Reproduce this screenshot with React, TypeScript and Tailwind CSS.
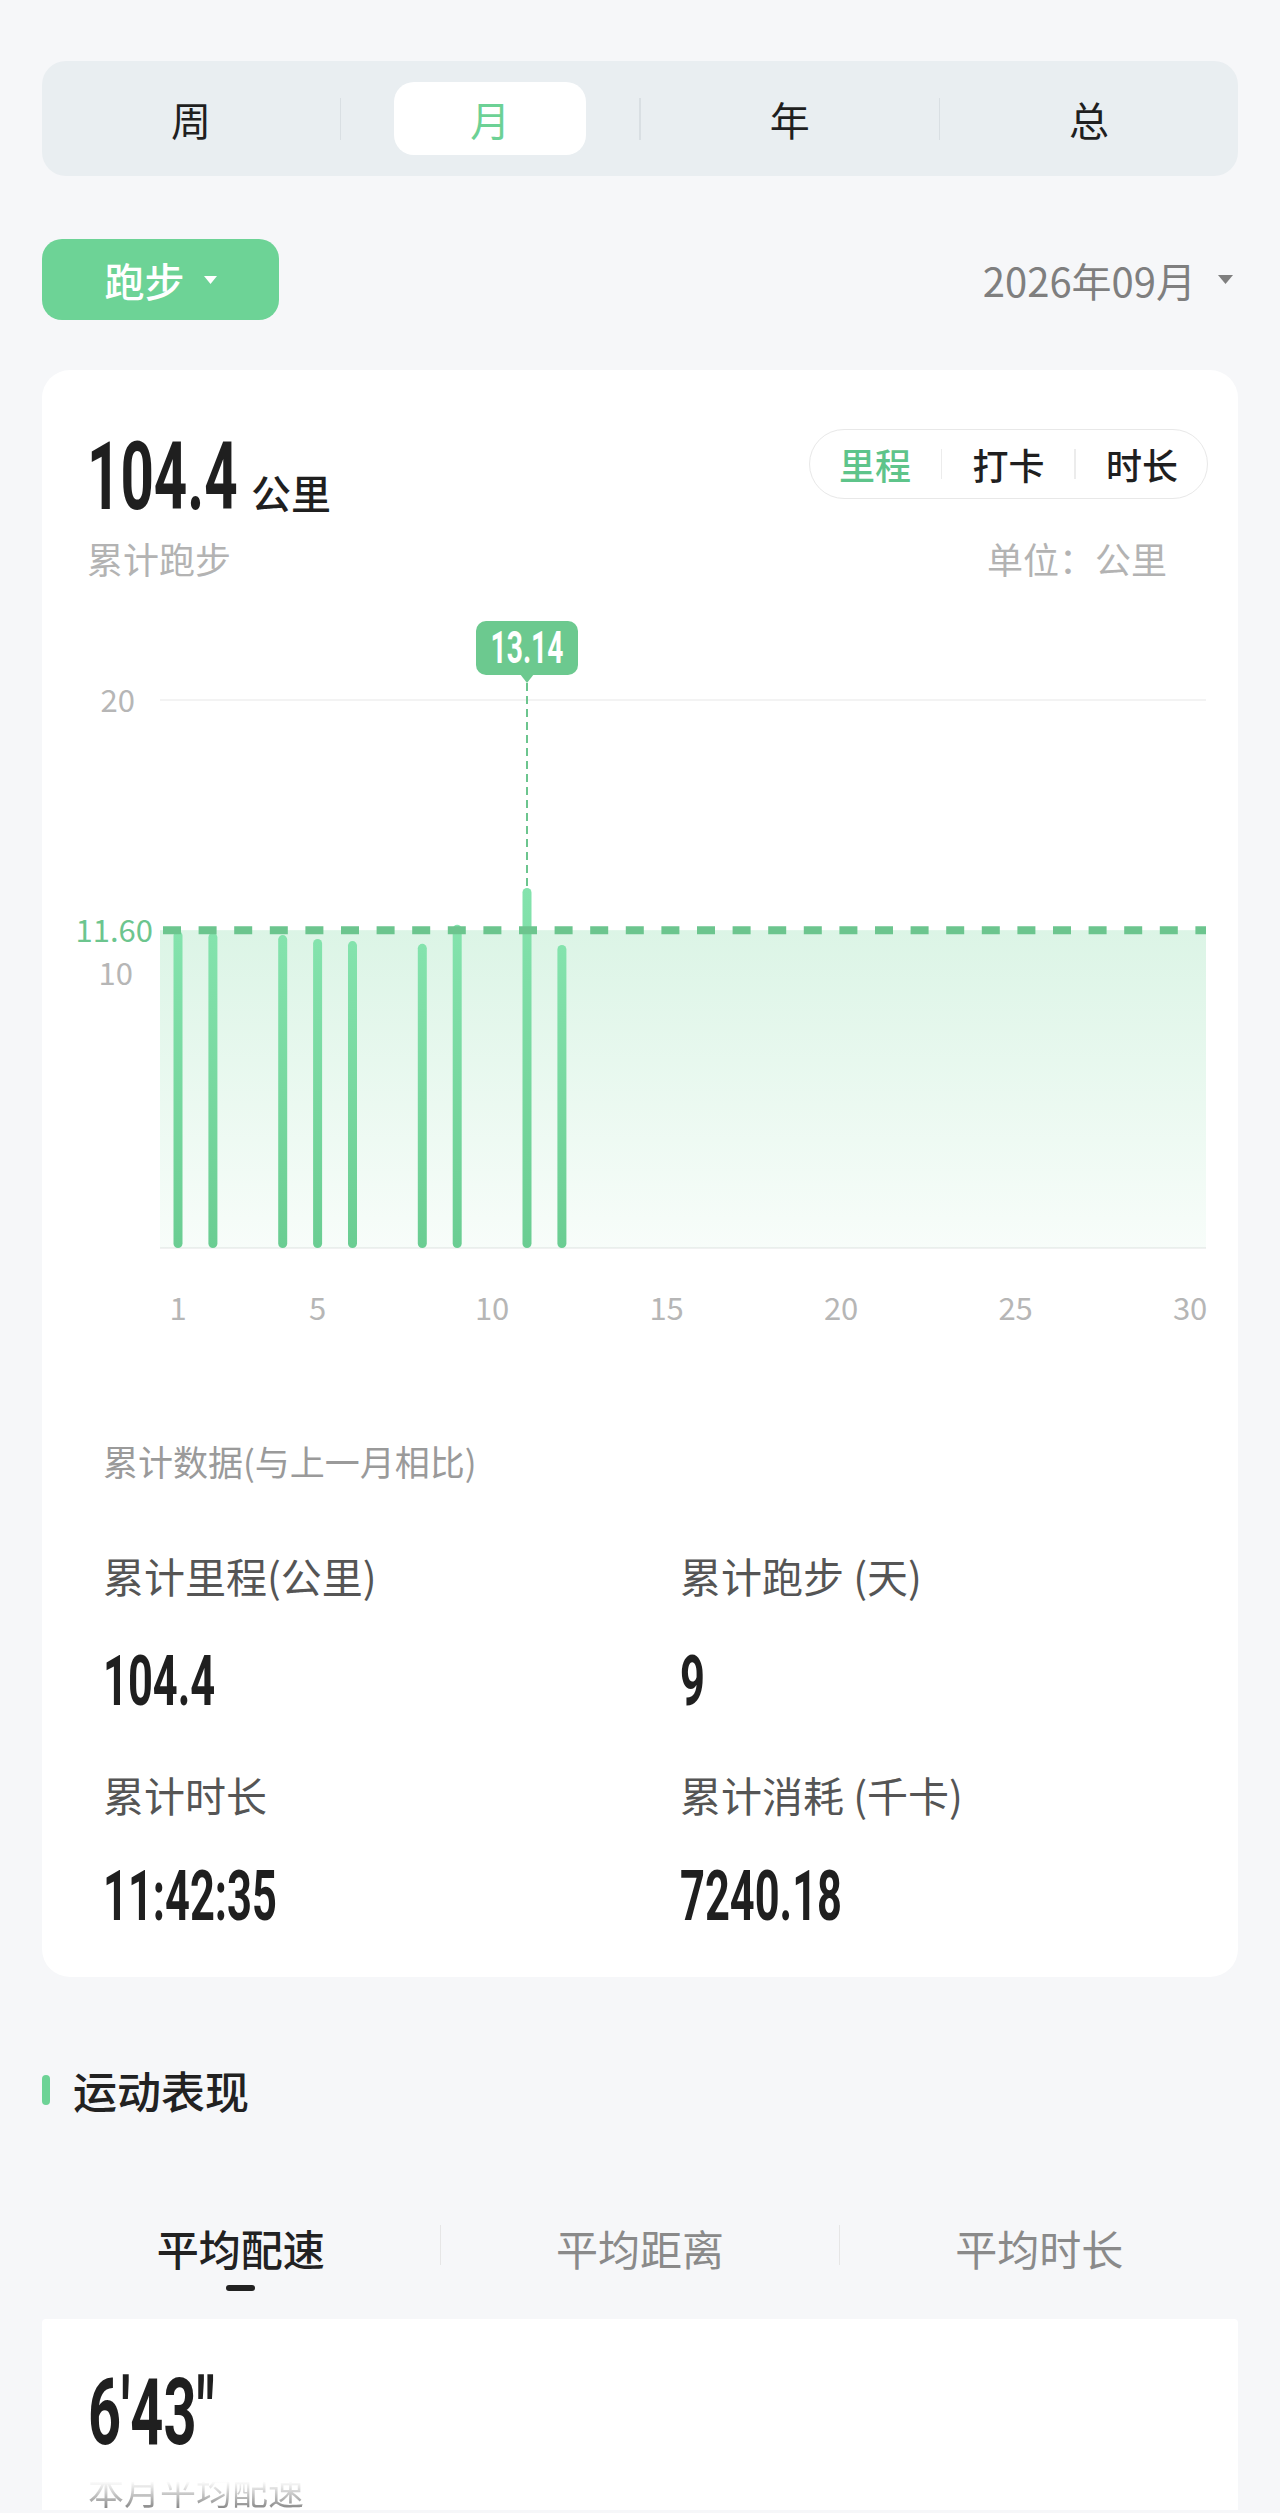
import React from "react";

const bars = [
  { d: 1, v: 11.56 },
  { d: 2, v: 11.5 },
  { d: 4, v: 11.42 },
  { d: 5, v: 11.28 },
  { d: 6, v: 11.2 },
  { d: 8, v: 11.1 },
  { d: 9, v: 11.8 },
  { d: 11, v: 13.14 },
  { d: 12, v: 11.06 },
];

// chart geometry (svg coords)
const X0 = 136;
const STEP = 34.9;
const BASE = 648;
const K = 27.4;
const xOf = (d: number) => X0 + (d - 1) * STEP;
const yOf = (v: number) => BASE - v * K;

const numCls =
  "inline-block origin-left scale-x-[0.62] whitespace-nowrap font-bold leading-none font-['Roboto','Liberation_Sans',sans-serif]";

function Tri({ color, w, h }: { color: string; w: number; h: number }) {
  return (
    <svg width={w} height={h} viewBox={`0 0 ${w} ${h}`}>
      <polygon points={`0,0 ${w},0 ${w / 2},${h}`} fill={color} />
    </svg>
  );
}

function Segment() {
  const items = ["周", "月", "年", "总"];
  return (
    <div className="flex h-[115px] items-center rounded-[24px] bg-[#e9eef1] text-[40px] leading-none">
      {items.map((t, i) => (
        <React.Fragment key={t}>
          {i > 0 && <div className="h-[42px] w-[1.5px] bg-[#d9dfe3]" />}
          <div className="flex flex-1 items-center justify-center">
            {t === "月" ? (
              <span className="flex h-[73px] w-[192px] items-center justify-center rounded-[20px] bg-white text-[#6cd195]">
                {t}
              </span>
            ) : (
              <span>{t}</span>
            )}
          </div>
        </React.Fragment>
      ))}
    </div>
  );
}

function Chart() {
  const xLabels = [1, 5, 10, 15, 20, 25, 30];
  const avgY = yOf(11.6);
  const peak = bars[7];
  const px = xOf(peak.d);
  return (
    <svg width="1195" height="740" viewBox="0 0 1195 740" className="block">
      <defs>
        <linearGradient id="area" x1="0" y1="0" x2="0" y2="1">
          <stop offset="0%" stopColor="#6cd396" stopOpacity="0.24" />
          <stop offset="100%" stopColor="#6cd396" stopOpacity="0.05" />
        </linearGradient>
        <linearGradient id="bar" x1="0" y1="0" x2="0" y2="1">
          <stop offset="0%" stopColor="#84e3ad" />
          <stop offset="100%" stopColor="#6acd92" />
        </linearGradient>
      </defs>

      <line x1="118" y1="100" x2="1164" y2="100" stroke="#efefef" strokeWidth="1.5" />
      <line x1="118" y1={BASE} x2="1164" y2={BASE} stroke="#f0f1f1" strokeWidth="2" />

      <rect x="118" y={avgY} width="1046" height={BASE - avgY} fill="url(#area)" />

      {bars.map((b) => (
        <rect
          key={b.d}
          x={xOf(b.d) - 4.5}
          y={yOf(b.v)}
          width="9"
          height={b.v * K}
          rx="4.5"
          fill="url(#bar)"
        />
      ))}

      <line
        x1="121"
        y1={avgY}
        x2="1164"
        y2={avgY}
        stroke="#6cc58e"
        strokeWidth="8"
        strokeDasharray="18 17.6"
      />

      <line
        x1={px}
        y1="83"
        x2={px}
        y2={yOf(peak.v)}
        stroke="#6cc58e"
        strokeWidth="2"
        strokeDasharray="8 5"
      />

      <rect x={px - 51} y="21" width="102" height="54" rx="10" fill="#6cc98f" />
      <polygon points={`${px - 7},74 ${px + 7},74 ${px},83`} fill="#6cc98f" />
      <text
        transform={`translate(${px} 63) scale(0.64 1)`}
        textAnchor="middle"
        fontFamily="Roboto, 'Liberation Sans', sans-serif"
        fontWeight="700"
        fontSize="44"
        fill="#ffffff"
      >
        13.14
      </text>

      <g fontFamily="'Noto Sans CJK SC', sans-serif" fontSize="31" fill="#b6b6b6">
        <text x="93" y="112" textAnchor="end">20</text>
        <text x="91" y="385" textAnchor="end">10</text>
        {xLabels.map((d) => (
          <text key={d} x={xOf(d)} y="720" textAnchor="middle">
            {d}
          </text>
        ))}
      </g>
      <text
        x="111"
        y="342"
        textAnchor="end"
        fontFamily="'Noto Sans CJK SC', sans-serif"
        fontSize="31"
        fill="#6cc58e"
      >
        11.60
      </text>
    </svg>
  );
}

function Stat({ label, value, gap }: { label: string; value: string; gap: string }) {
  return (
    <div className="flex flex-col">
      <span className="text-[41px] leading-none text-[#555555]">{label}</span>
      <span className={`${gap} h-[70px] text-[70px] leading-none text-[#1f1f1f]`}>
        <span className={numCls}>{value}</span>
      </span>
    </div>
  );
}

export default function App() {
  return (
    <div className="h-[2513px] overflow-hidden bg-[#f6f7f9] px-[42px] pt-[61px] font-['Noto_Sans_CJK_SC',sans-serif] text-[#1f1f1f]">
      <Segment />

      {/* sport + month */}
      <div className="mt-[63px] flex h-[81px] items-center justify-between">
        <button className="flex h-[81px] w-[237px] items-center justify-center gap-[19px] rounded-[20px] bg-[#6dd396] text-[40px] font-medium leading-none text-white">
          跑步
          <Tri color="#ffffff" w={13} h={8} />
        </button>
        <div className="flex items-center gap-[22px] pr-[5px] text-[40px] leading-none text-[#7f7f7f]">
          2026年09月
          <Tri color="#7f7f7f" w={15} h={9} />
        </div>
      </div>

      {/* main card */}
      <div className="mt-[50px] rounded-[28px] bg-white pb-[52px] pt-[51px]">
        <div className="flex items-start justify-between pl-[45px] pr-[30px]">
          <div className="flex h-[94px] items-baseline">
            <span className="w-[164px] text-[94px] leading-none">
              <span className={numCls}>104.4</span>
            </span>
            <span className="text-[40px] font-medium leading-none">公里</span>
          </div>
          <div className="mt-[8px] flex h-[70px] items-center gap-[30px] rounded-full border-[1.5px] border-[#e8e8e8] px-[29px] text-[36px] font-medium leading-none">
            <span className="text-[#5ec48a]">里程</span>
            <span className="h-[30px] w-[1.5px] bg-[#ececec]" />
            <span>打卡</span>
            <span className="h-[30px] w-[1.5px] bg-[#ececec]" />
            <span>时长</span>
          </div>
        </div>

        <div className="mt-[25px] flex justify-between pl-[45px] pr-[71px] text-[36px] leading-none text-[#b3b3b3]">
          <span>累计跑步</span>
          <span>单位：公里</span>
        </div>

        <div className="mt-[24px]">
          <Chart />
        </div>

        <div className="mt-[103px] pl-[61px]">
          <div className="text-[35px] leading-none text-[#9a9a9a]">累计数据(与上一月相比)</div>
          <div className="mt-[77px] grid grid-cols-[577px_1fr] gap-y-[64px]">
            <Stat label="累计里程(公里)" value="104.4" gap="mt-[44px]" />
            <Stat label="累计跑步 (天)" value="9" gap="mt-[44px]" />
            <Stat label="累计时长" value="11:42:35" gap="mt-[40px]" />
            <Stat label="累计消耗 (千卡)" value="7240.18" gap="mt-[40px]" />
          </div>
        </div>
      </div>

      {/* performance */}
      <div className="mt-[91px] flex h-[44px] items-center gap-[23px]">
        <span className="h-[30px] w-[8px] rounded-full bg-[#6dd396]" />
        <span className="text-[44px] font-medium leading-none text-[#222222]">运动表现</span>
      </div>

      <div className="mt-[115px] flex items-start">
        <div className="flex flex-1 flex-col items-center">
          <span className="text-[42px] font-medium leading-none text-[#222222]">平均配速</span>
          <span className="mt-[16px] h-[6px] w-[29px] rounded-full bg-[#222222]" />
        </div>
        <div className="-mt-[2px] h-[40px] w-[1.5px] bg-[#e6e6e6]" />
        <div className="flex flex-1 flex-col items-center">
          <span className="text-[42px] leading-none text-[#8a8a8a]">平均距离</span>
        </div>
        <div className="-mt-[2px] h-[40px] w-[1.5px] bg-[#e6e6e6]" />
        <div className="flex flex-1 flex-col items-center">
          <span className="text-[42px] leading-none text-[#8a8a8a]">平均时长</span>
        </div>
      </div>

      <div className="mt-[28px] rounded-t-[4px] bg-white pl-[46px] pt-[38px]">
        <div className="h-[93px] text-[93px] leading-none">
          <span className={numCls}>6'43"</span>
        </div>
        <div className="mt-[20px] inline-block bg-linear-to-b from-white/0 from-30% to-[#8a8a8a] bg-clip-text text-[36px] leading-[38px] text-transparent">
          本月平均配速
        </div>
      </div>
    </div>
  );
}
